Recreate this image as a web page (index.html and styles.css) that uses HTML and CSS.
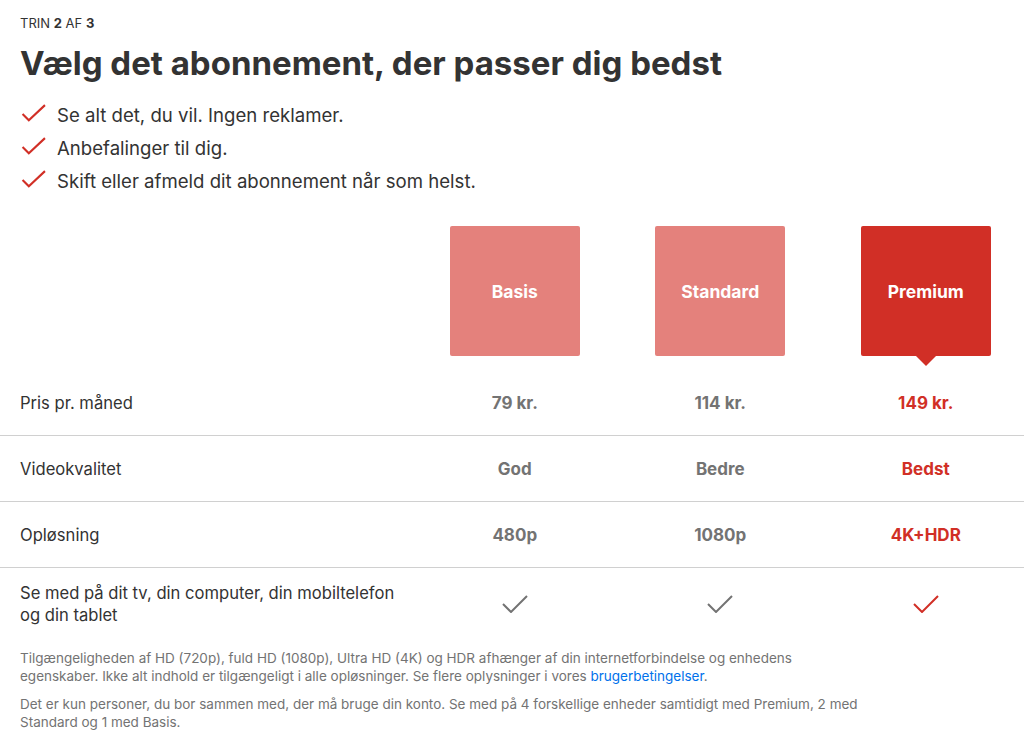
FILE: index.html
```html
<!DOCTYPE html>
<html lang="da">
<head>
<meta charset="utf-8">
<title>Vælg abonnement</title>
<link rel="stylesheet" href="styles.css">
</head>
<body>
<main class="page">
  <header class="intro">
    <div class="step">TRIN <b>2</b> AF <b>3</b></div>
    <h1 class="title">Vælg det abonnement, der passer dig bedst</h1>
    <ul class="perks">
      <li><svg class="perk-check" viewBox="0 0 24 24"><path d="M1.5 11.5 L7.5 17.5 L23 3" fill="none" stroke="#d12f26" stroke-width="2"/></svg><span>Se alt det, du vil. Ingen reklamer.</span></li>
      <li><svg class="perk-check" viewBox="0 0 24 24"><path d="M1.5 11.5 L7.5 17.5 L23 3" fill="none" stroke="#d12f26" stroke-width="2"/></svg><span>Anbefalinger til dig.</span></li>
      <li><svg class="perk-check" viewBox="0 0 24 24"><path d="M1.5 11.5 L7.5 17.5 L23 3" fill="none" stroke="#d12f26" stroke-width="2"/></svg><span>Skift eller afmeld dit abonnement når som helst.</span></li>
    </ul>
  </header>

  <section class="plans">
    <div class="plan-row head">
      <div class="label"></div>
      <div class="cell"><div class="plan-box">Basis</div></div>
      <div class="cell"><div class="plan-box">Standard</div></div>
      <div class="cell"><div class="plan-box selected">Premium</div></div>
    </div>
    <div class="plan-row line">
      <div class="label">Pris pr. måned</div>
      <div class="cell value">79 kr.</div>
      <div class="cell value">114 kr.</div>
      <div class="cell value active">149 kr.</div>
    </div>
    <div class="plan-row line">
      <div class="label">Videokvalitet</div>
      <div class="cell value">God</div>
      <div class="cell value">Bedre</div>
      <div class="cell value active">Bedst</div>
    </div>
    <div class="plan-row line">
      <div class="label">Opløsning</div>
      <div class="cell value">480p</div>
      <div class="cell value">1080p</div>
      <div class="cell value active">4K+HDR</div>
    </div>
    <div class="plan-row last">
      <div class="label">Se med på dit tv, din computer, din mobiltelefon og din tablet</div>
      <div class="cell"><svg class="tick" viewBox="0 0 26 18"><path d="M1 9 L9 17 L25 1" fill="none" stroke="#737373" stroke-width="2"/></svg></div>
      <div class="cell"><svg class="tick" viewBox="0 0 26 18"><path d="M1 9 L9 17 L25 1" fill="none" stroke="#737373" stroke-width="2"/></svg></div>
      <div class="cell"><svg class="tick" viewBox="0 0 26 18"><path d="M1 9 L9 17 L25 1" fill="none" stroke="#d12f26" stroke-width="2"/></svg></div>
    </div>
  </section>

  <footer class="notes">
    <p>Tilgængeligheden af HD (720p), fuld HD (1080p), Ultra HD (4K) og HDR afhænger af din internetforbindelse og enhedens egenskaber. Ikke alt indhold er tilgængeligt i alle opløsninger. Se flere oplysninger i vores <a href="#">brugerbetingelser</a>.</p>
    <p>Det er kun personer, du bor sammen med, der må bruge din konto. Se med på 4 forskellige enheder samtidigt med Premium, 2 med Standard og 1 med Basis.</p>
  </footer>
</main>
</body>
</html>
```

FILE: styles.css
```css
html, body {
  margin: 0;
  padding: 0;
  background: #fff;
  overflow: hidden;
}
body {
  font-family: "Inter", "Liberation Sans", sans-serif;
  color: #333;
}
.page {
  width: 1024px;
}
.intro {
  padding: 16px 20px 0 20px;
}
.step {
  font-size: 13px;
  line-height: 15px;
  color: #333;
}
.step b {
  font-weight: 700;
}
.title {
  margin: 13px 0 0 0;
  font-size: 33px;
  line-height: 38px;
  font-weight: 700;
  color: #333;
}
.perks {
  list-style: none;
  margin: 16px 0 0 0;
  padding: 0;
}
.perks li {
  display: flex;
  align-items: center;
  gap: 11px;
  height: 33px;
  font-size: 18.6px;
}
.perk-check {
  width: 25px;
  height: 25px;
  flex: none;
  margin-left: 1px;
}
.plans {
  margin-top: 29px;
  width: 1029px;
}
.plan-row {
  display: grid;
  grid-template-columns: 412px 205.5px 205.5px 205.5px;
  align-items: center;
}
.plan-row.head {
  height: 144px;
  align-items: start;
}
.plan-row.line {
  height: 65px;
  border-bottom: 1px solid #d0d0d0;
}
.plan-row.last {
  height: 72px;
}
.label {
  box-sizing: border-box;
  padding-left: 20px;
  font-size: 16.6px;
  line-height: 22px;
  color: #333;
  max-width: 405px;
}
.cell {
  display: flex;
  justify-content: center;
  align-items: center;
}
.plan-box {
  position: relative;
  width: 130px;
  height: 130px;
  border-radius: 2px;
  background: #e4817c;
  color: #fff;
  font-size: 17.5px;
  font-weight: 700;
  display: flex;
  align-items: center;
  justify-content: center;
}
.plan-box.selected {
  background: #d12f26;
}
.plan-box.selected::after {
  content: "";
  position: absolute;
  left: 50%;
  top: 100%;
  margin-left: -10px;
  border-left: 10px solid transparent;
  border-right: 10px solid transparent;
  border-top: 10px solid #d12f26;
}
.value {
  font-size: 17px;
  font-weight: 700;
  color: #737373;
}
.value.active {
  color: #d12f26;
}
.tick {
  width: 26px;
  height: 18px;
}
.notes {
  padding: 9px 20px 0 20px;
  width: 845px;
}
.notes p {
  margin: 0 0 10px 0;
  font-size: 13.5px;
  line-height: 18px;
  color: #737373;
}
.notes a {
  color: #0071eb;
  text-decoration: none;
}
```
